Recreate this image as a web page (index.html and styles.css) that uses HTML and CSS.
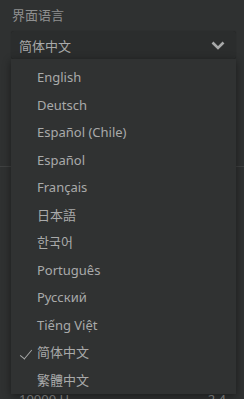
FILE: index.html
```html
<!DOCTYPE html>
<html lang="zh-CN">
<head>
    <meta charset="UTF-8">
    <title>界面语言</title>
    <link rel="stylesheet" href="styles.css">
</head>
<body>
    <div class="panel">
        <div class="field">
            <div class="field-label">界面语言</div>
            <div class="select">
                <span class="select-value">简体中文</span>
                <svg class="chevron" width="14" height="9" viewBox="0 0 14 9">
                    <path d="M1.5 1.5 L7 7 L12.5 1.5" fill="none" stroke="#a8a9a9" stroke-width="2.6"/>
                </svg>
            </div>

            <ul class="dropdown">
                <li>English</li>
                <li>Deutsch</li>
                <li>Español (Chile)</li>
                <li>Español</li>
                <li>Français</li>
                <li>日本語</li>
                <li>한국어</li>
                <li>Português</li>
                <li>Русский</li>
                <li>Tiếng Việt</li>
                <li class="selected">简体中文</li>
                <li>繁體中文</li>
            </ul>
        </div>

        <div class="filler"></div>
        <div class="separator"></div>
        <div class="filler2"></div>

        <div class="row">
            <span>10000 H</span>
            <span>2.4</span>
        </div>
    </div>
</body>
</html>
```

FILE: styles.css
```css
body {
    margin: 0;
    background-color: #2f3131;
    font-family: "Noto Sans", "Noto Sans CJK SC", sans-serif;
    font-size: 13px;
    color: #a9aaaa;
    overflow: hidden;
}

.panel {
    padding: 6px 8px 0 11px;
}

.field {
    position: relative;
}

.field-label {
    color: #8e8f8f;
    line-height: 18px;
    padding-left: 1px;
    margin-bottom: 7px;
}

.select {
    height: 28px;
    background-color: #2b2d2d;
    border-radius: 3px;
    display: flex;
    align-items: center;
    justify-content: space-between;
    padding: 0 11px 0 8px;
    box-shadow: 0 0 1px rgba(0, 0, 0, 0.4);
}

.select-value {
    color: #a9aaaa;
}

.chevron {
    display: block;
}

.dropdown {
    position: absolute;
    left: 0;
    right: 0;
    top: 53px;
    margin: 0;
    padding: 5px 0 0 0;
    list-style: none;
    background-color: #303232;
    box-shadow: 0 2px 8px rgba(0, 0, 0, 0.45);
    z-index: 2;
}

.dropdown li {
    height: 27.5px;
    line-height: 27.5px;
    padding-left: 26px;
    color: #a9aaaa;
    position: relative;
}

.dropdown li.selected::before {
    content: "";
    position: absolute;
    left: 12px;
    top: 8px;
    width: 5px;
    height: 11px;
    border-right: 1.3px solid #a9aaaa;
    border-bottom: 1.3px solid #a9aaaa;
    transform: rotate(40deg);
}

.filler {
    height: 107px;
}

.separator {
    height: 1px;
    background-color: #3f4141;
    margin-left: -11px;
    margin-right: -8px;
}

.filler2 {
    height: 225px;
}

.row {
    display: flex;
    justify-content: space-between;
    padding: 0 10px 0 8px;
    line-height: 14px;
    color: #8e8f8f;
}
```
